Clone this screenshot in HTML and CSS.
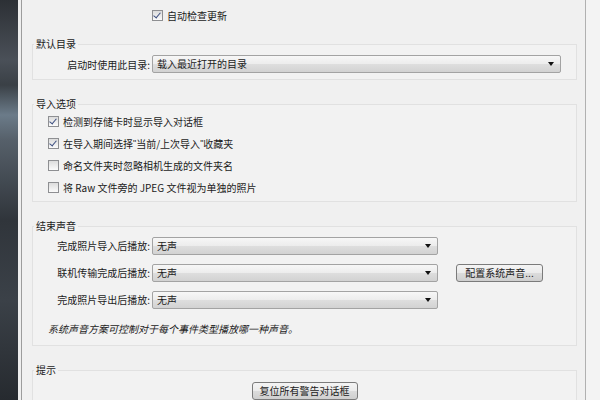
FILE: index.html
```html
<!DOCTYPE html>
<html lang="zh-CN">
<head>
	<meta charset="UTF-8">
	<title>首选项</title>
	<link rel="stylesheet" href="styles.css">
</head>
<body>
   <div class="window">
   	<div class="side"></div>
   	<div class="panel">
   		<div class="toprow">
   			<label class="check"><span class="box on"></span>自动检查更新</label>
   		</div>

   		<fieldset class="group g1">
   			<legend>默认目录</legend>
   			<div class="row">
   				<span class="lbl">启动时使用此目录:</span>
   				<div class="drop wide">载入最近打开的目录<i class="arrow"></i></div>
   			</div>
   		</fieldset>

   		<fieldset class="group g2">
   			<legend>导入选项</legend>
   			<label class="check crow"><span class="box on"></span>检测到存储卡时显示导入对话框</label>
   			<label class="check crow"><span class="box on"></span>在导入期间选择<span class="q">"</span>当前/上次导入<span class="q">"</span>收藏夹</label>
   			<label class="check crow"><span class="box"></span>命名文件夹时忽略相机生成的文件夹名</label>
   			<label class="check crow"><span class="box"></span>将 Raw 文件旁的 JPEG 文件视为单独的照片</label>
   		</fieldset>

   		<fieldset class="group g3">
   			<legend>结束声音</legend>
   			<div class="row srow">
   				<span class="lbl">完成照片导入后播放:</span>
   				<div class="drop">无声<i class="arrow"></i></div>
   			</div>
   			<div class="row srow">
   				<span class="lbl">联机传输完成后播放:</span>
   				<div class="drop">无声<i class="arrow"></i></div>
   				<span class="btn b1">配置系统声音...</span>
   			</div>
   			<div class="row srow">
   				<span class="lbl">完成照片导出后播放:</span>
   				<div class="drop">无声<i class="arrow"></i></div>
   			</div>
   			<p class="note">系统声音方案可控制对于每个事件类型播放哪一种声音。</p>
   		</fieldset>

   		<fieldset class="group g4">
   			<legend>提示</legend>
   			<div class="center"><span class="btn b2">复位所有警告对话框</span></div>
   		</fieldset>
   	</div>
   	<div class="edge"></div>
   </div>
</body>
</html>
```

FILE: styles.css
```css
      body,p,fieldset,legend{margin:0;padding:0;}
      body{
      	   background:#f0f0f0;
      	   font-family:"Noto Sans CJK SC","Liberation Sans",sans-serif;
      	   font-size:10px;
      	   color:#1b1b1b;
      	  }
      .window{
      	   display:flex;
      	   width:600px;
      	   height:400px;
      	   overflow:hidden;
      	  }
      .side{
      	   width:18px;
      	   flex:none;
      	   background:linear-gradient(#2c3035 0,#4a5058 60px,#3a4046 85px,#6b7b89 115px,#56606a 140px,#30353b 220px,#3b4148 300px,#262a2f 400px);
      	   border-right:3px solid #eeeeee;
      	  }
      .panel{
      	   flex:none;
      	   border-left:1px solid #9c9c9c;
      	   border-right:1px solid #b0b0b0;
      	   padding:0 8px 0 10px;
      	   width:545px;
      	  }
      .edge{
      	   flex:1;
      	   background:#f3f3f3;
      	  }
      .toprow{
      	   padding-top:8px;
      	   height:14px;
      	   padding-left:120px;
      	  }
      .check{
      	   display:flex;
      	   align-items:center;
      	   height:14px;
      	  }
      .q{
      	   font-family:"Liberation Sans",sans-serif;
      	   font-size:9px;
      	  }
      .box{
      	   width:9px;
      	   height:9px;
      	   border:1px solid #8e8f92;
      	   background:linear-gradient(#dcdcdc,#fbfbfb);
      	   margin-right:4px;
      	   flex:none;
      	   position:relative;
      	  }
      .box.on::after{
      	   content:"";
      	   position:absolute;
      	   left:2px;top:0;
      	   width:3px;height:6px;
      	   border:solid #3d4f80;
      	   border-width:0 1.5px 1.5px 0;
      	   transform:rotate(40deg);
      	  }
      .group{
      	   border:1px solid #e1e1e1;
      	   background:#f2f2f2;
      	   padding:5px 10px 6px;
      	   margin-top:16px;
      	   min-width:0;
      	  }
      .group legend{
      	   line-height:12px;
      	   padding:0 2px;
      	   margin-left:-9px;
      	  }
      .g2,.g3,.g4{margin-top:18px;}
      .g2{padding-top:0;padding-bottom:3px;}
      .g3{padding-top:0;padding-bottom:9px;}
      .g4{padding-top:6px;height:40px;}
      .row{
      	   display:flex;
      	   align-items:center;
      	   height:18px;
      	  }
      .srow{height:27px;}
      .lbl{
      	   width:107px;
      	   text-align:right;
      	   margin-right:2px;
      	   flex:none;
      	  }
      .drop{
      	   position:relative;
      	   box-sizing:border-box;
      	   width:286px;
      	   height:18px;
      	   line-height:16px;
      	   padding-left:4px;
      	   border:1px solid #a3a3a3;
      	   border-radius:2px;
      	   background:linear-gradient(#f7f7f7,#ececec 50%,#dedede 50%,#d2d2d2);
      	   flex:none;
      	  }
      .drop.wide{width:409px;}
      .arrow{
      	   position:absolute;
      	   right:6px;top:6px;
      	   border:3px solid transparent;
      	   border-top:4px solid #111;
      	   border-bottom:0;
      	  }
      .crow{height:22px;margin-left:5px;}
      .btn{
      	   display:inline-block;
      	   box-sizing:border-box;
      	   height:18px;
      	   line-height:16px;
      	   text-align:center;
      	   border:1px solid #7b7b7b;
      	   border-radius:3px;
      	   background:linear-gradient(#f4f4f4,#ebebeb 50%,#dcdcdc 50%,#cfcfcf);
      	  }
      .b1{width:87px;margin-left:18px;}
      .b2{width:106px;}
      .note{
      	   font-style:italic;
      	   margin:9px 0 0 5px;
      	   line-height:14px;
      	  }
      .center{text-align:center;}
```
